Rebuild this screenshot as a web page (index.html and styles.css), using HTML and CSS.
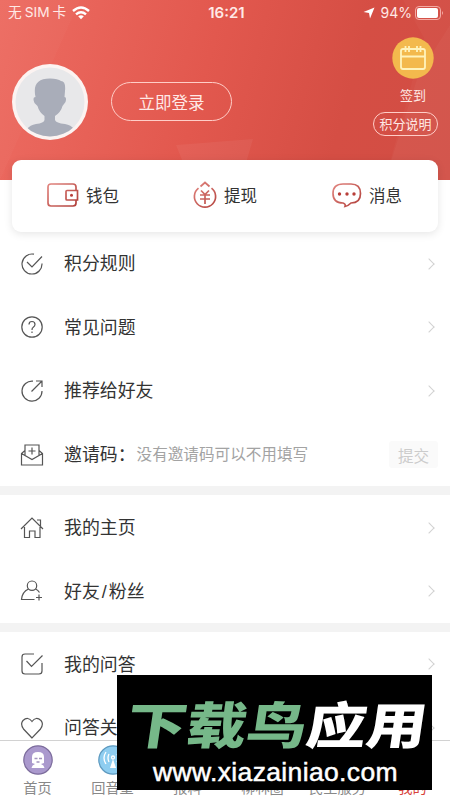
FILE: index.html
```html
<!DOCTYPE html>
<html lang="zh-CN">
<head>
<meta charset="utf-8">
<title>我的</title>
<link rel="stylesheet" href="styles.css">
</head>
<body>
<div class="phone">
  <header class="hero">
    <svg class="facets" viewBox="0 0 450 180" aria-hidden="true">
      <path d="M80 0 0 180V0Z" fill="#fff" opacity=".025"/>
      <path d="M176 145 253 139 241 180H190Z" fill="#fff" opacity=".05"/>
      <path d="M403 0 424 38 385 180H450V0Z" fill="#fff" opacity=".025"/>
      <path d="M450 25 418 76 385 180H450Z" fill="#fff" opacity=".03"/>
    </svg>
    <div class="status">
      <div class="carrier"><span>无<span class="sim">SIM</span>卡</span>
        <svg width="18" height="14" viewBox="0 0 18 14" fill="none" stroke="#fff" stroke-width="2.4"><path d="M1 5Q9-2 17 5M4 8.3Q9 4 14 8.3"/><path d="m6.2 10.3 2.8 3 2.8-3Q9 8 6.2 10.3Z" fill="#fff" stroke="none"/></svg>
      </div>
      <b class="time">16:21</b>
      <div class="power">
        <svg width="12" height="12" viewBox="0 0 12 12"><path d="M11.5.5 7 11.5 6 6 .5 5Z" fill="#fff"/></svg>
        <span>94%</span>
        <svg width="29" height="14" viewBox="0 0 29 14"><rect x=".5" y=".5" width="25" height="13" rx="3.5" fill="none" stroke="#f4aaa4"/><rect x="2" y="2" width="21" height="10" rx="2" fill="#fff"/><path d="M27 5q2 2 0 4Z" fill="#f4aaa4"/></svg>
      </div>
    </div>
    <div class="profile">
      <svg class="avatar" viewBox="0 0 76 76"><defs><clipPath id="face"><circle cx="38" cy="38" r="34.5"/></clipPath></defs><circle cx="38" cy="38" r="38" fill="#fcf3f1"/><circle cx="38" cy="38" r="34.5" fill="#e8e8ea"/><path clip-path="url(#face)" fill="#a9adb9" d="M23.500 33C21 21 25 14.500 38 14.500Q46 14.500 49 17Q54 17 53 27L52.500 33Q55 33 53.500 38L50.500 42Q49 48 43 52V56Q44 59 53 60Q59 61 62 65L64 76H11L15 65Q18 61 24 60Q32 59 32.500 56V52Q27 48 25.500 42L22.500 39Q20 33 23.500 33Z"/></svg>
      <button class="login">立即登录</button>
      <div class="sign">
        <svg width="42" height="42" viewBox="0 0 42 42"><circle cx="21" cy="21" r="20.700" fill="#f3b94d"/><g fill="none" stroke="#fff3bc" stroke-width="1.800"><rect x="9" y="12" width="24" height="20" rx="2"/><path d="M9 19.500H33M13.500 9v6M17 9v6M25 9v6M28.500 9v6"/></g></svg>
        <span>签到</span>
        <button class="explain">积分说明</button>
      </div>
    </div>
  </header>

  <nav class="card">
    <div class="quick"><svg width="32" height="26" viewBox="0 0 32 26" fill="none" stroke="url(#red)" stroke-width="1.700"><defs><linearGradient id="red" gradientUnits="userSpaceOnUse" x1="0" y1="0" x2="24" y2="26"><stop stop-color="#e58a84"/><stop offset="1" stop-color="#b3423d"/></linearGradient></defs><path d="M29 8.500V5q0-3-3-3H4Q1 2 1 5V21q0 3 3 3H26q3 0 3-3V18M30.500 8.500H20q-1 0-1 1v7.500q0 1 1 1H30.500Z"/><circle cx="24.500" cy="13.300" r="1.500" fill="#b83e39" stroke="none"/></svg><span>钱包</span></div>
    <div class="quick"><svg width="24" height="28" viewBox="0 0 24 28" fill="none" stroke="url(#red)" stroke-width="1.700"><path d="M7.500 5.500 12 1.500 16.500 5.500M5.500 7.200a10.600 10.600 0 1 0 13 0M8 9.500l4 4 4-4M7 14H17M7 18H17M12 13.500V23"/></svg><span>提现</span></div>
    <div class="quick"><svg width="30" height="26" viewBox="0 0 30 26" fill="none" stroke="url(#red)" stroke-width="1.700"><path d="M11 21Q1 21 1 11.500T11 2H19Q28.500 2 28.500 11.500T19 21Q16 24 13 24.500 14 22 11 21Z"/><g fill="#b83e39" stroke="none"><circle cx="7.500" cy="12" r="1.700"/><circle cx="15" cy="12" r="1.700"/><circle cx="22" cy="12" r="1.700"/></g></svg><span>消息</span></div>
  </nav>

  <main class="menu">
    <section>
      <div class="row"><svg class="icon" viewBox="0 0 24 24"><path d="M14 2.200A10 10 0 1 0 22 11.500M7 10l5 5L22 4.500"/></svg><span class="name">积分规则</span><i class="arrow"></i></div>
      <div class="row"><svg class="icon" viewBox="0 0 24 24"><circle cx="12" cy="12" r="10.200"/><path d="M9 9.500Q9 6.500 12 6.500T15 9.500Q15 11 13 12.500 12 13 12 15M12 16.500V18"/></svg><span class="name">常见问题</span><i class="arrow"></i></div>
      <div class="row"><svg class="icon" viewBox="0 0 24 24"><path d="M13 2.200A10 10 0 1 0 22 12M11.500 12.500 22 2M16 2h6v6"/></svg><span class="name">推荐给好友</span><i class="arrow"></i></div>
      <div class="row"><svg class="icon" viewBox="0 0 24 24"><path d="M5 7.500 1.500 10.500V22H22.500V10.500L19 7.500M1.500 10.500 12 16.500 22.500 10.500M5 12.300V2H19V12.300M12 4.500v7M8.500 8h7"/></svg><span class="name">邀请码：</span><span class="hint">没有邀请码可以不用填写</span><button class="submit">提交</button></div>
    </section>
    <section>
      <div class="row"><svg class="icon" viewBox="0 0 24 24"><path d="M1 13 12 2 23 13M17 4H20.500V10M4.500 11V21.500H9.500V15H15V21.500H20V11"/></svg><span class="name">我的主页</span><i class="arrow"></i></div>
      <div class="row"><svg class="icon" viewBox="0 0 24 24"><circle cx="12" cy="6.700" r="4.700"/><path d="M8.500 10Q2 13 1.500 20.500H14.500M15.500 10Q18 11 19.500 13.500M19 15.500v6M16 18.500h6"/></svg><span class="name">好友<span class="slash">/</span>粉丝</span><i class="arrow"></i></div>
    </section>
    <section>
      <div class="row"><svg class="icon" viewBox="0 0 24 24"><path d="M14 2H5Q2 2 2 5V19q0 3 3 3H19q3 0 3-3V11M6.500 9l5 5.500L22.500 3.500"/></svg><span class="name">我的问答</span><i class="arrow"></i></div>
      <div class="row"><svg class="icon" viewBox="0 0 24 24"><path d="M12 22 3.500 13Q0 8 3 4.500 8 0 12 5.500 16 0 21 4.500 24 8 20.500 13Z"/></svg><span class="name">问答关注</span><i class="arrow"></i></div>
    </section>
  </main>

  <footer class="tabs">
    <div class="tab"><svg viewBox="0 0 30 30"><circle cx="15" cy="15" r="14.200" fill="#aa99cd" stroke="#7c6c9c" stroke-width="1.200"/><path d="M9 18V12Q9 7 15 7T21 12V18L18 19Q21 20 21.500 23H8.500Q9 20 12 19Z" fill="#fff"/><path d="M11.500 13.500h3M16 13.500h3M13.500 17h3" stroke="#a394bd" stroke-width="1.500"/></svg><span>首页</span></div>
    <div class="tab"><svg viewBox="0 0 30 30"><circle cx="15" cy="15" r="14.200" fill="#8ecdf0" stroke="#5d99bf" stroke-width="1.200"/><path d="m15 14-3 9h6Z" fill="#fff"/><g fill="none" stroke="#fff" stroke-width="1.300"><circle cx="15" cy="12.500" r="1.500"/><path d="M11 9Q9 13 11 17M8 7Q4 13 8 19M19 9Q21 13 19 17M22 7Q26 13 22 19"/></g></svg><span>回音壁</span></div>
    <div class="tab"><span>报料</span></div>
    <div class="tab"><span>柳林圈</span></div>
    <div class="tab"><span>民生服务</span></div>
    <div class="tab active"><span>我的</span></div>
  </footer>

  <aside class="banner">
    <div class="brand"><span class="green">下载鸟</span>应用</div>
    <div class="site">www.xiazainiao.com</div>
  </aside>
</div>
</body>
</html>
```
FILE: styles.css
```css
* { box-sizing: border-box; }
body { margin: 0; }
button { padding: 0; background: none; color: inherit; font: inherit; }
.phone {
  position: relative;
  display: flex;
  flex-direction: column;
  width: 450px;
  height: 800px;
  overflow: hidden;
  background: #fff;
  color: #333;
  font-family: "Liberation Sans", "Noto Sans CJK SC", sans-serif;
}
.hero {
  position: relative;
  flex: none;
  height: 180px;
  background: linear-gradient(105deg, #ed6c62 0%, #e2584e 45%, #d54e44 75%, #d14d44 100%);
  color: #fff;
}
.facets { position: absolute; inset: 0; width: 450px; height: 180px; }
.status {
  position: relative;
  display: grid;
  grid-template-columns: 1fr auto 1fr;
  align-items: center;
  height: 25px;
  padding: 0 6px 0 8px;
  font: 14px/25px Inter, "Noto Sans CJK SC", sans-serif;
  color: #ffe9e6;
}
.carrier, .power { display: flex; align-items: center; }
.carrier { gap: 6px; font-size: 13.7px; }
.sim { margin: 0 3px; }
.time { margin-right: -1px; font-size: 15px; font-weight: 600; }
.power { justify-content: flex-end; gap: 3px; }
.power span { margin-left: 3px; font-size: 14px; }
.profile { position: relative; display: flex; padding: 12px 12px 0; }
.avatar { width: 76px; height: 76px; margin-top: 27px; }
.login {
  width: 121px;
  height: 39px;
  margin: 45px 0 0 23px;
  border: 1.5px solid #ffcdc7;
  border-radius: 20px;
  color: #ffe9e6;
  font-size: 16.5px;
}
.sign {
  display: flex;
  flex-direction: column;
  align-items: center;
  width: 65px;
  margin-left: auto;
  font-size: 13px;
  line-height: 20px;
  color: #ffe9e6;
}
.sign svg { margin-left: 15px; }
.sign > span { margin: 7px 0 6px 15px; }
.explain {
  width: 65px;
  height: 24px;
  border: 1.5px solid #ffcdc7;
  border-radius: 13px;
  line-height: 21px;
}
.card {
  position: relative;
  flex: none;
  display: grid;
  grid-template-columns: repeat(3, 1fr);
  height: 72px;
  margin: -20px 12px 0;
  padding-bottom: 2px;
  border-radius: 9px;
  background: #fff;
  box-shadow: 0 2px 8px rgba(0, 0, 0, .1);
}
.quick { display: flex; align-items: center; justify-content: center; gap: 7px; font-size: 16.5px; }
.menu { flex: 1; min-height: 0; overflow: hidden; }
.menu section + section { border-top: 9.4px solid #f3f3f3; padding-top: .4px; }
.row { display: flex; align-items: center; height: 63.6px; padding: 0 12px 0 20px; }
.icon { width: 24px; height: 24px; fill: none; stroke: #555; stroke-width: 1.2; }
.name { margin: 1px 0 0 20px; font-size: 17.9px; line-height: 26px; }
.slash { margin: 0 2px; }
.hint { margin-left: 1px; color: #a3a3a3; font-size: 15.6px; line-height: 22px; }
.submit {
  width: 49px;
  height: 27px;
  margin-left: auto;
  border: 0;
  border-radius: 3px;
  background: #fafafa;
  color: #ccc;
  font-size: 15.6px;
}
.arrow {
  width: 8px;
  height: 8px;
  margin: 0 5px 0 auto;
  border: solid #d2d2d2;
  border-width: 1px 1px 0 0;
  transform: rotate(45deg);
}
.tabs {
  position: relative;
  flex: none;
  display: grid;
  grid-template-columns: repeat(6, 1fr);
  height: 60px;
  border-top: 1px solid #d2d2d2;
  background: #fff;
}
.tab {
  display: flex;
  flex-direction: column;
  align-items: center;
  justify-content: flex-end;
  gap: 3px;
  padding-bottom: 2px;
  color: #888;
  font-size: 14.2px;
  line-height: 20px;
}
.tab svg { width: 30px; height: 30px; }
.tab.active { color: #d8433b; }
.banner {
  position: absolute;
  left: 117px;
  top: 675px;
  width: 315px;
  height: 115px;
  padding: 18px 0 0 35px;
  background: #000;
  color: #fff;
}
.brand {
  width: 250px;
  height: 64px;
  font: 900 50px/58px "Noto Sans CJK SC", sans-serif;
  white-space: nowrap;
  transform: scaleX(1.2) skewX(-7deg);
}
.green { color: #76b889; }
.site { margin-left: 1px; font-size: 26.5px; line-height: 30px; letter-spacing: .35px; -webkit-text-stroke: .5px #fff; }
```
